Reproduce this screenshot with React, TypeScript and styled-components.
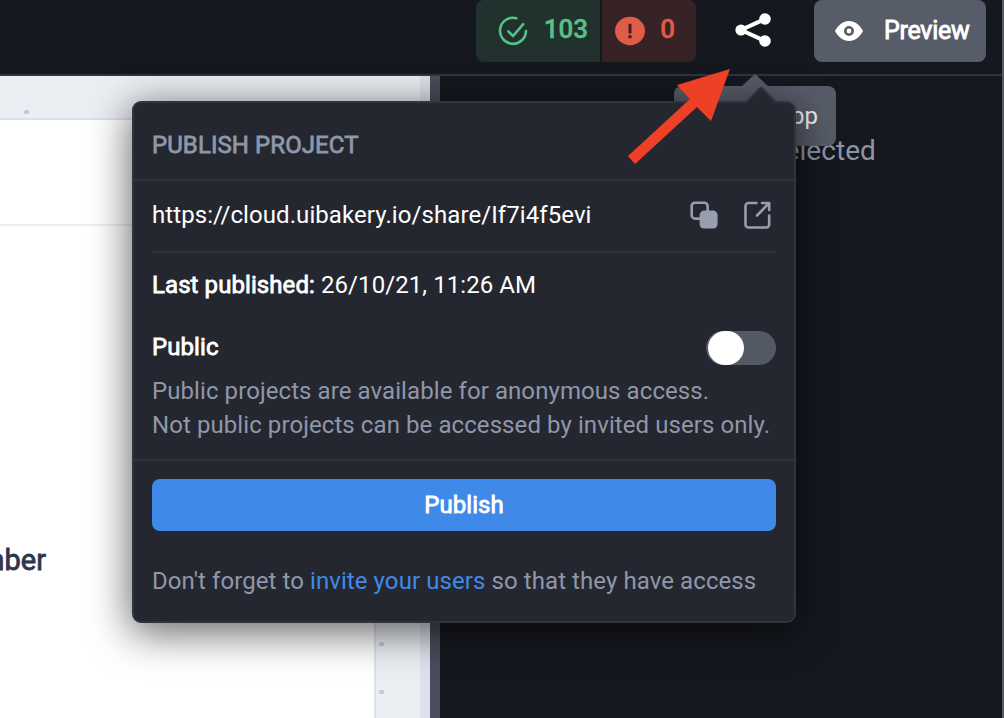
import React from "react";
import styled, { createGlobalStyle } from "styled-components";

const Global = createGlobalStyle`
  *, *::before, *::after { box-sizing: border-box; }
  html, body { margin: 0; background: #15181f; overflow: hidden; }
  body { font-family: Roboto, "Liberation Sans", sans-serif; color: #fff; }
`;

const Screen = styled.div`
  position: relative;
  width: 1004px;
  height: 718px;
  display: flex;
  overflow: hidden;
  background: #15181f;
`;
const Workspace = styled.div`
  flex: 1;
  display: flex;
  flex-direction: column;
  border-right: 2px solid #5a5b64;
`;
const Header = styled.header`
  height: 76px;
  display: flex;
  align-items: flex-start;
  justify-content: flex-end;
  padding-right: 16px;
  border-bottom: 2px solid #31333f;
`;
const Badge = styled.div<{ $tone: "ok" | "error" }>`
  height: 62px;
  display: flex;
  align-items: center;
  justify-content: space-between;
  width: ${(p) => (p.$tone === "ok" ? 124 : 94)}px;
  padding: ${(p) => (p.$tone === "ok" ? "0 12px 0 22px" : "0 21px 0 12px")};
  margin-left: ${(p) => (p.$tone === "ok" ? 0 : 2)}px;
  border-radius: ${(p) => (p.$tone === "ok" ? "8px 0 0 8px" : "0 8px 8px 0")};
  background: ${(p) => (p.$tone === "ok" ? "#21322e" : "#372325")};
  color: ${(p) => (p.$tone === "ok" ? "#56c288" : "#e05c48")};
`;
const Count = styled.span`
  font-size: 26px;
  font-weight: 500;
  line-height: 59px;
  height: 62px;
  -webkit-text-stroke: 0.4px currentColor;
`;
const IconButton = styled.button`
  border: 0;
  padding: 0;
  background: none;
  color: #fff;
  width: 118px;
  height: 62px;
  display: flex;
  align-items: center;
  justify-content: center;
  svg { margin: -2px 4px 0 0; }
`;
const Preview = styled.button`
  border: 0;
  width: 172px;
  height: 62px;
  padding: 0 0 0 21px;
  display: flex;
  gap: 21px;
  align-items: center;
  border-radius: 8px;
  background: #575c69;
  color: #fff;
  font: 400 25px/60px Roboto, sans-serif;
  letter-spacing: -0.25px;
  -webkit-text-stroke: 0.9px currentColor;
  span { height: 62px; padding-top: 1px; }
`;
const Body = styled.div`
  flex: 1;
  display: flex;
`;
const Canvas = styled.section`
  width: 430px;
  display: grid;
  grid-template: 44px 1fr / 376px 44px 10px;
  background: #ebeef3;
`;
const Ruler = styled.div`
  grid-column: 1 / 3;
  border-bottom: 2px solid #dde1ec;
  padding: 34px 0 0 24px;
`;
const Dot = styled.i`
  display: block;
  width: 5px;
  height: 4px;
  border-radius: 2px 1px 1px 1px;
  background: #c5c8d8;
`;
const Page = styled.div`
  background: #fff;
  border-right: 2px solid #dde1ec;
  display: flex;
  flex-direction: column;
`;
const PageTop = styled.div`
  height: 106px;
  border-bottom: 2px solid #ebeef3;
`;
const PageLabel = styled.div`
  width: 46px;
  margin-top: 314px;
  display: flex;
  justify-content: flex-end;
  color: #30364a;
  font-size: 29px;
  line-height: 41px;
  -webkit-text-stroke: 0.8px currentColor;
`;
const Gutter = styled.div`
  padding: 522px 0 0 3px;
  display: flex;
  flex-direction: column;
  gap: 44px;
`;
const Scroll = styled.div`
  grid-area: 1 / 3 / 3 / 4;
  background: #dde1ec;
`;
const Divider = styled.div`
  width: 10px;
  background: #4a4d5a;
`;
const Side = styled.aside`
  flex: 1;
  padding: 54px 126px 0 0;
  text-align: right;
  color: #8f95a5;
  font-size: 28px;
  line-height: 42px;
  letter-spacing: 0.08px;
  white-space: nowrap;
`;
const Tooltip = styled.div`
  position: absolute;
  left: 674px;
  top: 86px;
  width: 162px;
  height: 60px;
  padding-right: 18px;
  border-radius: 8px;
  background: #575c69;
  color: #f4f4f5;
  font-size: 24px;
  line-height: 61px;
  text-align: right;
  &::before {
    content: "";
    position: absolute;
    left: 68px;
    top: -24px;
    border: 12px solid transparent;
    border-left-width: 13px;
    border-right-width: 13px;
    border-bottom-color: #575c69;
  }
`;
const Popover = styled.div`
  position: absolute;
  left: 132px;
  top: 101px;
  width: 664px;
  height: 522px;
  border: 2px solid #31333f;
  border-radius: 9px;
  background: #252730;
  box-shadow: 0 8px 40px 2px rgba(0, 0, 0, 0.6);
  font-size: 24px;
  letter-spacing: 0.08px;
`;
const Tip = styled.svg`
  position: absolute;
  left: 611px;
  top: -17px;
`;
const Title = styled.h2`
  margin: 0;
  height: 78px;
  padding: 0 18px;
  border-bottom: 2px solid #31333f;
  color: #8f97a9;
  font-size: 24px;
  font-weight: 400;
  line-height: 84px;
  -webkit-text-stroke: 0.8px currentColor;
`;
const Details = styled.div`
  height: 280px;
  padding: 0 18px;
  border-bottom: 2px solid #31333f;
`;
const LinkRow = styled.div`
  height: 72px;
  padding-right: 5px;
  display: flex;
  align-items: center;
  border-bottom: 2px solid #31333f;
  color: #989daf;
  svg { margin-bottom: 2px; }
  svg + svg { margin-left: 25px; }
`;
const Url = styled.span`
  flex: 1;
  color: #fff;
  line-height: 68px;
  height: 70px;
`;
const Published = styled.div`
  height: 64px;
  line-height: 64px;
`;
const Strong = styled.span`
  -webkit-text-stroke: 0.8px currentColor;
`;
const PublicRow = styled.div`
  height: 54px;
  margin-top: 4px;
  display: flex;
  align-items: center;
  justify-content: space-between;
  line-height: 26px;
  ${Strong} { margin-bottom: 2px; }
`;
const Toggle = styled.div`
  width: 70px;
  height: 34px;
  padding-left: 2px;
  border-radius: 17px;
  background: #535a65;
  &::before {
    content: "";
    display: block;
    width: 36px;
    height: 34px;
    border-radius: 17px;
    background: #fff;
  }
`;
const Hint = styled.p`
  margin: 0;
  color: #8f97a9;
  line-height: 34px;
  position: relative;
  white-space: nowrap;
`;
const Hints = styled.div`
  margin-top: -1px;
`;
const Footer = styled.div`
  padding: 18px;
`;
const Publish = styled.button`
  display: block;
  width: 624px;
  height: 52px;
  padding: 0;
  border: 0;
  border-radius: 8px;
  background: #3f8ae8;
  color: #fff;
  font: 400 24px/52px Roboto, sans-serif;
  letter-spacing: 0.08px;
  -webkit-text-stroke: 0.8px currentColor;
`;
const Note = styled(Hint)`
  margin-top: 33px;
`;
const Link = styled.a`
  color: #3f8ae8;
`;
const Arrow = styled.svg`
  position: absolute;
  left: 620px;
  top: 60px;
`;

export default function App() {
  return (
    <Screen>
      <Global />
      <Workspace>
        <Header>
          <Badge $tone="ok">
            <svg width="30" height="30" viewBox="0 0 30 30" fill="none" stroke="currentColor" strokeWidth="2.6" strokeLinecap="round" strokeLinejoin="round">
              <path d="M18.4 2.2A13 13 0 1 0 28 15M10.3 15.4l4.8 4.6L25.2 8.2" />
            </svg>
            <Count>103</Count>
          </Badge>
          <Badge $tone="error">
            <svg width="32" height="30" viewBox="0 0 32 30">
              <ellipse cx="16" cy="15" rx="15" ry="14.2" fill="currentColor" />
              <path d="M16 9v7.2" stroke="#372325" strokeWidth="3" strokeLinecap="round" />
              <circle cx="16" cy="20.8" r="1.8" fill="#372325" />
            </svg>
            <Count>0</Count>
          </Badge>
          <IconButton aria-label="Share">
            <svg width="38" height="36" viewBox="0 0 38 36" fill="currentColor">
              <path d="M31 7L7 18l24 11" fill="none" stroke="currentColor" strokeWidth="4" />
              <circle cx="7" cy="18" r="5.6" />
              <circle cx="31" cy="7" r="5.8" />
              <circle cx="31" cy="29" r="5.8" />
            </svg>
          </IconButton>
          <Preview>
            <svg width="28" height="22" viewBox="0 0 28 22">
              <path d="M0 11C2 7 7 1 14 1s12 6 14 10c-2 4-7 10-14 10S2 15 0 11Z" fill="#fff" />
              <circle cx="14" cy="11" r="3.700" fill="none" stroke="#575c69" strokeWidth="2.6" />
            </svg>
            <span>Preview</span>
          </Preview>
        </Header>
        <Body>
          <Canvas>
            <Ruler><Dot /></Ruler>
            <Page>
              <PageTop />
              <PageLabel>Number</PageLabel>
            </Page>
            <Gutter><Dot /><Dot /></Gutter>
            <Scroll />
          </Canvas>
          <Divider />
          <Side>No component selected</Side>
        </Body>
      </Workspace>
      <Tooltip>Publish app</Tooltip>
      <Popover>
        <Tip width="32" height="20" viewBox="0 0 32 20">
          <path d="M1 16.2L14.6 2.4Q16 1 17.4 2.4L31 16.2V20H1Z" fill="#252730" />
          <path d="M0 16H1.4L14.6 2.4Q16 1 17.4 2.4L30.6 16H32" fill="none" stroke="#31333f" strokeWidth="2" />
        </Tip>
        <Title>PUBLISH PROJECT</Title>
        <Details>
          <LinkRow>
            <Url>https://cloud.uibakery.io/share/If7i4f5evi</Url>
            <svg width="28" height="28" viewBox="0 0 28 28">
              <path d="M10 17.600H5a3.300 3.300 0 0 1-3.300-3.300V5A3.300 3.300 0 0 1 5 1.700h9.300A3.300 3.300 0 0 1 17.600 5v5" fill="none" stroke="currentColor" strokeWidth="2.600" />
              <rect x="9.600" y="9.600" width="18" height="18" rx="4.500" fill="currentColor" />
            </svg>
            <svg width="28" height="28" viewBox="0 0 28 28" fill="none" stroke="currentColor" strokeWidth="2.600" strokeLinecap="round" strokeLinejoin="round">
              <path d="M13.500 2H5.500a3 3 0 0 0-3 3v18.500a3 3 0 0 0 3 3h17.700a3 3 0 0 0 3-3V14.500" />
              <path d="M19 2h7.200v7M25.500 2.700L14 14.500" />
            </svg>
          </LinkRow>
          <Published><Strong>Last published:</Strong> 26/10/21, 11:26 AM</Published>
          <PublicRow><Strong>Public</Strong><Toggle /></PublicRow>
          <Hints>
            <Hint>Public projects are available for anonymous access.</Hint>
            <Hint>Not public projects can be accessed by invited users only.</Hint>
          </Hints>
        </Details>
        <Footer>
          <Publish>Publish</Publish>
          <Note>Don't forget to <Link>invite your users</Link> so that they have access</Note>
        </Footer>
      </Popover>
      <Arrow width="115" height="110" viewBox="0 0 115 110">
        <path d="M110 9L57 25l13 14L8 96l7 8 62-57 14 14Z" fill="#ee4027" />
      </Arrow>
    </Screen>
  );
}
